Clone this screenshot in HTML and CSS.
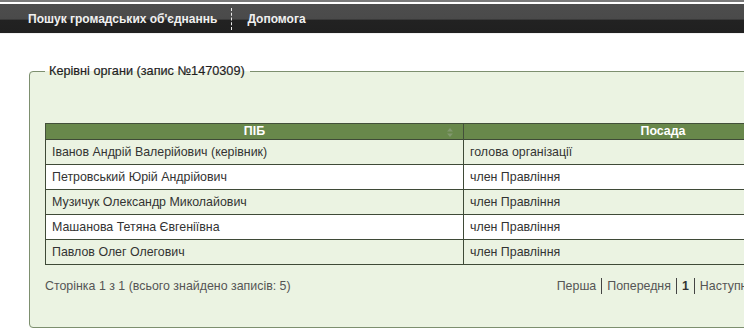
FILE: index.html
```html
<!DOCTYPE html>
<html lang="uk">
<head>
<meta charset="utf-8">
<title>Керівні органи</title>
<link rel="stylesheet" href="styles.css">
</head>
<body>
<div class="topline"></div>
<nav class="navbar">
  <a class="nav-item" href="#">Пошук громадських об'єднаннь</a>
  <span class="nav-sep"></span>
  <a class="nav-item" href="#">Допомога</a>
</nav>
<main class="page">
  <fieldset class="box">
    <legend class="box-title">Керівні органи (запис №1470309)</legend>
    <table class="grid">
      <thead>
        <tr>
          <th class="col-name">ПІБ<svg class="sort" width="6" height="9" viewBox="0 0 6 9"><path d="M3 0 L6 3.5 H0 Z M3 9 L6 5.5 H0 Z" fill="#8d9f7e"/></svg></th>
          <th class="col-pos">Посада</th>
        </tr>
      </thead>
      <tbody>
        <tr class="odd"><td>Іванов Андрій Валерійович (керівник)</td><td>голова організації</td></tr>
        <tr><td>Петровський Юрій Андрійович</td><td>член Правління</td></tr>
        <tr class="odd"><td>Музичук Олександр Миколайович</td><td>член Правління</td></tr>
        <tr><td>Машанова Тетяна Євгеніївна</td><td>член Правління</td></tr>
        <tr class="odd"><td>Павлов Олег Олегович</td><td>член Правління</td></tr>
      </tbody>
    </table>
    <div class="pager">
      <span class="pager-info">Сторінка 1 з 1 (всього знайдено записів: 5)</span>
      <span class="pager-links">
        <a href="#">Перша</a><span class="bar"></span><a href="#">Попередня</a><span class="bar"></span><b>1</b><span class="bar"></span><a href="#">Наступна</a><span class="bar"></span><a href="#">Остання</a>
      </span>
    </div>
  </fieldset>
</main>
</body>
</html>
```

FILE: styles.css
```css
html, body {
  margin: 0;
  padding: 0;
  overflow: hidden;
  background: #fff;
}
body {
  font-family: "Liberation Sans", Arial, sans-serif;
  font-size: 12.4px;
  color: #333;
  width: 1000px;
}
.topline {
  height: 2px;
  background: #7a7a7a;
  margin-bottom: 2px;
}
.navbar {
  height: 29px;
  display: flex;
  align-items: center;
  padding-left: 28px;
  background: linear-gradient(to bottom, #4d4d4d 0, #4a4a4a 15px, #3a3a3a 15px, #3a3a3a 16px, #222 16px, #202020 100%);
  border-bottom: 1px solid #f2f2f2;
}
.nav-item {
  color: #f0f0f0;
  font-weight: bold;
  font-size: 12px;
  text-decoration: none;
  padding-top: 1px;
}
.nav-sep {
  width: 0;
  height: 22px;
  border-left: 1px dashed #e8e8e8;
  margin: 0 15px 0 14px;
}
.page {
  padding: 30px 0 0 29px;
}
.box {
  margin: 0;
  width: 900px;
  height: 264px;
  padding: 0 15px;
  border: 1px solid #7d8f6f;
  border-radius: 4px;
  background: #ebf3e2;
  box-sizing: border-box;
}
.box-title {
  padding: 0 5px 0 4px;
  margin-left: 0;
  font-size: 12.7px;
  color: #1f1f1f;
  line-height: 14px;
  -webkit-text-stroke: 0.2px #1f1f1f;
}
.grid {
  margin-top: 45px;
  width: 818px;
  border-collapse: collapse;
  border: 1px solid #43503a;
}
.grid th {
  background: #68884b;
  color: #fff;
  font-weight: bold;
  font-size: 12.4px;
  height: 15px;
  padding: 0;
  line-height: 15px;
  border-right: 1px solid #43503a;
  border-top: 1px solid #43503a;
}
.col-name {
  width: 417px;
  position: relative;
}
.sort {
  position: absolute;
  right: 10px;
  top: 4px;
  opacity: 0.7;
}
.grid td {
  height: 24px;
  padding: 0 6px;
  border: 1px solid #3f4a37;
  color: #333;
  background: #fff;
  white-space: nowrap;
}
.grid tr.odd td {
  background: #ebf3e2;
}
.pager {
  width: 818px;
  display: flex;
  justify-content: space-between;
  align-items: center;
  margin-top: 13px;
  color: #555;
}
.pager-links {
  display: flex;
  align-items: center;
  padding-right: 49px;
}
.pager-links a {
  color: #555;
  text-decoration: none;
}
.pager-links b {
  color: #333;
}
.bar {
  width: 1px;
  height: 16px;
  background: #444;
  margin: 0 5px;
}
```
